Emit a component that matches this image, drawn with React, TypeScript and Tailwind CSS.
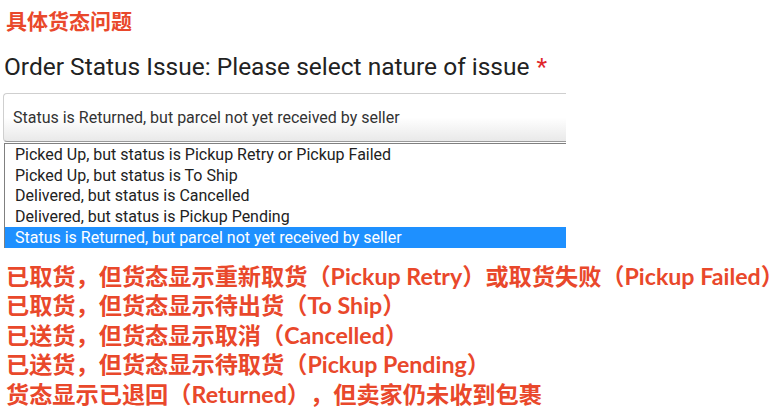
import React from "react";

const options = [
  "Picked Up, but status is Pickup Retry or Pickup Failed",
  "Picked Up, but status is To Ship",
  "Delivered, but status is Cancelled",
  "Delivered, but status is Pickup Pending",
  "Status is Returned, but parcel not yet received by seller",
];

const lines = [
  "已取货，但货态显示重新取货（Pickup Retry）或取货失败（Pickup Failed）",
  "已取货，但货态显示待出货（To Ship）",
  "已送货，但货态显示取消（Cancelled）",
  "已送货，但货态显示待取货（Pickup Pending）",
  "货态显示已退回（Returned），但卖家仍未收到包裹",
];

export default function App() {
  return (
    <div className="w-[784px] h-[418px] bg-white overflow-hidden flex flex-col">
      <div className="h-[42px] flex items-center pl-[6px] text-[21px] font-bold text-[#e9482b] font-['Noto_Sans_CJK_SC',sans-serif]">
        具体货态问题
      </div>
      <div className="h-[51px] flex items-center pl-[4px] text-[24.5px] text-[#222] font-[Roboto,sans-serif]">
        <span>Order Status Issue: Please select nature of issue</span>
        <span className="ml-[7px] text-[#e0262b]">*</span>
      </div>
      <div className="ml-[3px] w-[563px] h-[49px] border border-r-0 border-[#cfcfcf] border-b-[#9a9a9a] rounded-l-[4px] flex items-center pl-[9px] text-[16px] text-[#333] bg-gradient-to-b from-white via-white to-[#e9e9e9] font-[Roboto,sans-serif]">
        Status is Returned, but parcel not yet received by seller
      </div>
      <div className="ml-[4px] mt-[1px] w-[562px] border-l border-t border-[#808080] flex flex-col pt-[1px] font-[Roboto,sans-serif]">
        {options.map((o, i) => (
          <div
            key={i}
            className={
              i === options.length - 1
                ? "h-[20.6px] flex items-center pl-[10px] text-[16px] bg-[#1e90ff] text-white"
                : "h-[20.6px] flex items-center pl-[10px] text-[16px] text-[#222]"
            }
          >
            {o}
          </div>
        ))}
      </div>
      <div className="mt-[14px] pl-[6px] flex flex-col text-[23.2px] font-bold text-[#e9482b] font-['Lato','Noto_Sans_CJK_SC',sans-serif] [text-spacing-trim:space-all]">
        {lines.map((l, i) => (
          <div key={i} className="h-[29.5px] leading-[29.5px] whitespace-nowrap">
            {l}
          </div>
        ))}
      </div>
    </div>
  );
}
